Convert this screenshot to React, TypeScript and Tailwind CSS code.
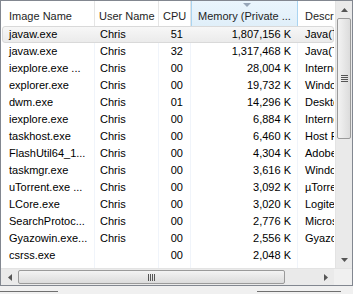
import React from "react";

type Proc = {
  name: string;
  user: string;
  cpu: string;
  mem: string;
  desc: string;
};

const procs: Proc[] = [
  { name: "javaw.exe", user: "Chris", cpu: "51", mem: "1,807,156 K", desc: "Java(TM) Platform SE binary" },
  { name: "javaw.exe", user: "Chris", cpu: "32", mem: "1,317,468 K", desc: "Java(TM) Platform SE binary" },
  { name: "iexplore.exe ...", user: "Chris", cpu: "00", mem: "28,004 K", desc: "Internet Explorer" },
  { name: "explorer.exe", user: "Chris", cpu: "00", mem: "19,732 K", desc: "Windows Explorer" },
  { name: "dwm.exe", user: "Chris", cpu: "01", mem: "14,296 K", desc: "Desktop Window Manager" },
  { name: "iexplore.exe", user: "Chris", cpu: "00", mem: "6,884 K", desc: "Internet Explorer" },
  { name: "taskhost.exe", user: "Chris", cpu: "00", mem: "6,460 K", desc: "Host Process for Windows Tasks" },
  { name: "FlashUtil64_1...", user: "Chris", cpu: "00", mem: "4,304 K", desc: "Adobe Flash Player" },
  { name: "taskmgr.exe", user: "Chris", cpu: "00", mem: "3,616 K", desc: "Windows Task Manager" },
  { name: "uTorrent.exe ...", user: "Chris", cpu: "00", mem: "3,092 K", desc: "µTorrent" },
  { name: "LCore.exe", user: "Chris", cpu: "00", mem: "3,020 K", desc: "Logitech Gaming Software" },
  { name: "SearchProtoc...", user: "Chris", cpu: "00", mem: "2,776 K", desc: "Microsoft Windows Search" },
  { name: "Gyazowin.exe...", user: "Chris", cpu: "00", mem: "2,556 K", desc: "Gyazo" },
  { name: "csrss.exe", user: "", cpu: "00", mem: "2,048 K", desc: "" },
];

const cols = "grid grid-cols-[94px_64px_32px_107px_36px]";

const Header = () => (
  <div className={`${cols} h-[25px] shrink-0 bg-white text-[#1e1e1e]`}>
    <div className="border-r border-[#e5e5e5] pl-[8px] pt-[7px]">Image Name</div>
    <div className="border-r border-[#e5e5e5] pl-[4px] pt-[7px]">User Name</div>
    <div className="border-r border-[#e5e5e5] pl-[4px] pt-[7px] overflow-hidden">CPU</div>
    <div className="relative border-x border-[#a9d4f1] bg-gradient-to-b from-[#eaf5fd] to-[#e0eff9] pl-[6px] pt-[7px] whitespace-nowrap">
      <svg className="absolute left-[51px] top-[2px]" width="8" height="5" viewBox="0 0 8 5">
        <path d="M0 0h8L4 4z" fill="#97a6b8" />
      </svg>
      Memory (Private ...
    </div>
    <div className="pl-[7px] pt-[7px] whitespace-nowrap overflow-hidden">Description</div>
  </div>
);

const Row = ({ p, selected }: { p: Proc; selected?: boolean }) => (
  <div className="relative h-[17px]">
    {selected && (
      <div className="absolute inset-x-[1px] inset-y-0 rounded-[3px] border border-[#d9d9d9] bg-gradient-to-b from-[#f7f7f7] to-[#ebebeb]" />
    )}
    <div className={`${cols} relative h-[17px] leading-[17px]`}>
      <div className="pl-[8px] whitespace-nowrap overflow-hidden">{p.name}</div>
      <div className="pl-[5px]">{p.user}</div>
      <div className="pr-[8px] text-right">{p.cpu}</div>
      <div className="pr-[7px] text-right whitespace-nowrap">{p.mem}</div>
      <div className="pl-[7px] whitespace-nowrap overflow-hidden">{p.desc}</div>
    </div>
  </div>
);

const Arrow = ({ dir }: { dir: "up" | "down" | "left" | "right" }) => {
  const d = {
    up: "M0 4L3.5 0 7 4z",
    down: "M0 0h7L3.5 4z",
    left: "M4 0v7L0 3.5z",
    right: "M0 0v7l4-3.5z",
  }[dir];
  const v = dir === "up" || dir === "down";
  return (
    <svg width={v ? 7 : 4} height={v ? 4 : 7} viewBox={v ? "0 0 7 4" : "0 0 4 7"}>
      <path d={d} fill="#555" />
    </svg>
  );
};

const VScroll = () => (
  <div className="flex w-[17px] shrink-0 flex-col bg-[#eaeaea] border-l border-[#e3e3e3]">
    <div className="flex h-[17px] items-center justify-center">
      <Arrow dir="up" />
    </div>
    <div className="flex-1 flex flex-col">
      <div className="mx-[1px] flex h-[121px] flex-col items-center justify-center gap-[1px] rounded-[2px] border border-[#9a9a9a] bg-gradient-to-r from-[#f3f3f3] to-[#dcdcdc]">
        <div className="h-[1px] w-[7px] bg-[#555]" />
        <div className="h-[1px] w-[7px] bg-[#555]" />
        <div className="h-[1px] w-[7px] bg-[#555]" />
        <div className="h-[1px] w-[7px] bg-[#555]" />
      </div>
    </div>
    <div className="flex h-[17px] items-center justify-center">
      <Arrow dir="down" />
    </div>
  </div>
);

const HScroll = () => (
  <div className="flex h-[17px] shrink-0 border-t border-[#e3e3e3] bg-[#eaeaea]">
    <div className="flex w-[17px] items-center justify-center">
      <Arrow dir="left" />
    </div>
    <div className="flex flex-1">
      <div className="my-[1px] flex w-[267px] items-center justify-center gap-[1px] rounded-[2px] border border-[#9a9a9a] bg-gradient-to-b from-[#f3f3f3] to-[#dcdcdc]">
        <div className="h-[7px] w-[1px] bg-[#555]" />
        <div className="h-[7px] w-[1px] bg-[#555]" />
        <div className="h-[7px] w-[1px] bg-[#555]" />
        <div className="h-[7px] w-[1px] bg-[#555]" />
      </div>
    </div>
    <div className="flex w-[17px] items-center justify-center">
      <Arrow dir="right" />
    </div>
    <div className="w-[18px] bg-[#f0f0f0]" />
  </div>
);

const App = () => (
  <div
    className="h-[294px] w-[353px] overflow-hidden bg-[#f0f0f0] text-[11px] text-black"
    style={{ fontFamily: '"Liberation Sans", Arial, sans-serif' }}
  >
    <div className="flex h-[286px] flex-col border border-[#828790] bg-white">
      <div className="flex min-h-0 flex-1">
        <div className="relative min-w-0 flex-1 overflow-hidden">
          <div className="pointer-events-none absolute inset-0 top-[25px] grid grid-cols-[94px_64px_32px_107px_36px]">
            <div className="border-r border-[#f0f4fa]" />
            <div className="border-r border-[#f0f4fa]" />
            <div className="border-r border-[#f0f4fa]" />
            <div className="border-r border-[#f0f4fa]" />
            <div />
          </div>
          <Header />
          {procs.map((p, i) => (
            <Row key={i} p={p} selected={i === 0} />
          ))}
        </div>
        <VScroll />
      </div>
      <HScroll />
    </div>
    <div className="mt-[5px] flex justify-between pr-[12px]">
      <div className="h-[3px] w-[58px] border-t border-[#707070]" />
      <div className="h-[3px] w-[84px] border-t border-[#707070]" />
    </div>
  </div>
);

export default App;
